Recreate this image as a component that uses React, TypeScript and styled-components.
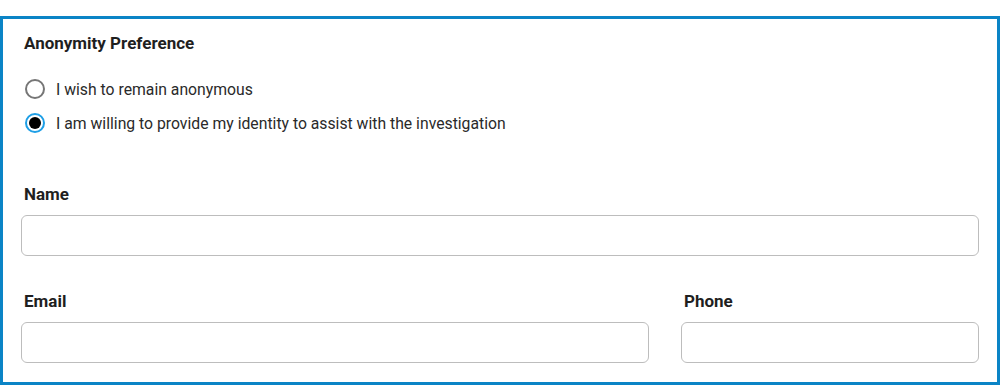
import styled, { createGlobalStyle } from "styled-components";
import { useState } from "react";

const GlobalStyle = createGlobalStyle`
  * {
    box-sizing: border-box;
  }
  body {
    margin: 0;
    background: #ffffff;
    font-family: Roboto, "Liberation Sans", Arial, sans-serif;
    color: #222222;
  }
`;

const Page = styled.div`
  padding-top: 16px;
`;

const Card = styled.section`
  height: 369px;
  border: 3px solid #0b84c6;
  padding: 14px 18px 0 18px;
  display: flex;
  flex-direction: column;
`;

const Label = styled.div`
  font-size: 17px;
  line-height: 20px;
  font-weight: 700;
  color: #1f1f1f;
  padding-left: 3px;
`;

const RadioGroup = styled.div`
  display: flex;
  flex-direction: column;
  gap: 10px;
  margin-top: 24px;
  padding-left: 4px;
`;

const RadioRow = styled.label`
  display: flex;
  align-items: center;
  gap: 11px;
  height: 24px;
  font-size: 15.75px;
  color: #2a2a2a;
  cursor: pointer;
`;

const RadioDot = styled.span<{ checked: boolean }>`
  width: 20px;
  height: 20px;
  border-radius: 50%;
  flex-shrink: 0;
  border: 2px solid ${(p) => (p.checked ? "#1e9fe6" : "#767676")};
  display: flex;
  align-items: center;
  justify-content: center;
  &::after {
    content: "";
    width: 12px;
    height: 12px;
    border-radius: 50%;
    background: #000000;
    display: ${(p) => (p.checked ? "block" : "none")};
  }
`;

const Field = styled.div<{ top: number }>`
  display: flex;
  flex-direction: column;
  gap: 11px;
  margin-top: ${(p) => p.top}px;
`;

const Input = styled.input`
  width: 100%;
  height: 41px;
  border: 1px solid #bdbdbd;
  border-radius: 6px;
  padding: 0 12px;
  font-family: inherit;
  font-size: 16px;
  outline: none;
  background: #ffffff;
`;

const Row = styled.div`
  display: grid;
  grid-template-columns: calc((100% + 32px) * 2 / 3 - 32px) 1fr;
  column-gap: 32px;
  margin-top: 35px;
`;

const options = [
  "I wish to remain anonymous",
  "I am willing to provide my identity to assist with the investigation",
];

export default function App() {
  const [choice, setChoice] = useState(1);

  return (
    <Page>
      <GlobalStyle />
      <Card>
        <Label>Anonymity Preference</Label>
        <RadioGroup>
          {options.map((text, i) => (
            <RadioRow key={text} onClick={() => setChoice(i)}>
              <RadioDot checked={choice === i} />
              {text}
            </RadioRow>
          ))}
        </RadioGroup>
        <Field top={49}>
          <Label>Name</Label>
          <Input type="text" />
        </Field>
        <Row>
          <Field top={0}>
            <Label>Email</Label>
            <Input type="email" />
          </Field>
          <Field top={0}>
            <Label>Phone</Label>
            <Input type="tel" />
          </Field>
        </Row>
      </Card>
    </Page>
  );
}
